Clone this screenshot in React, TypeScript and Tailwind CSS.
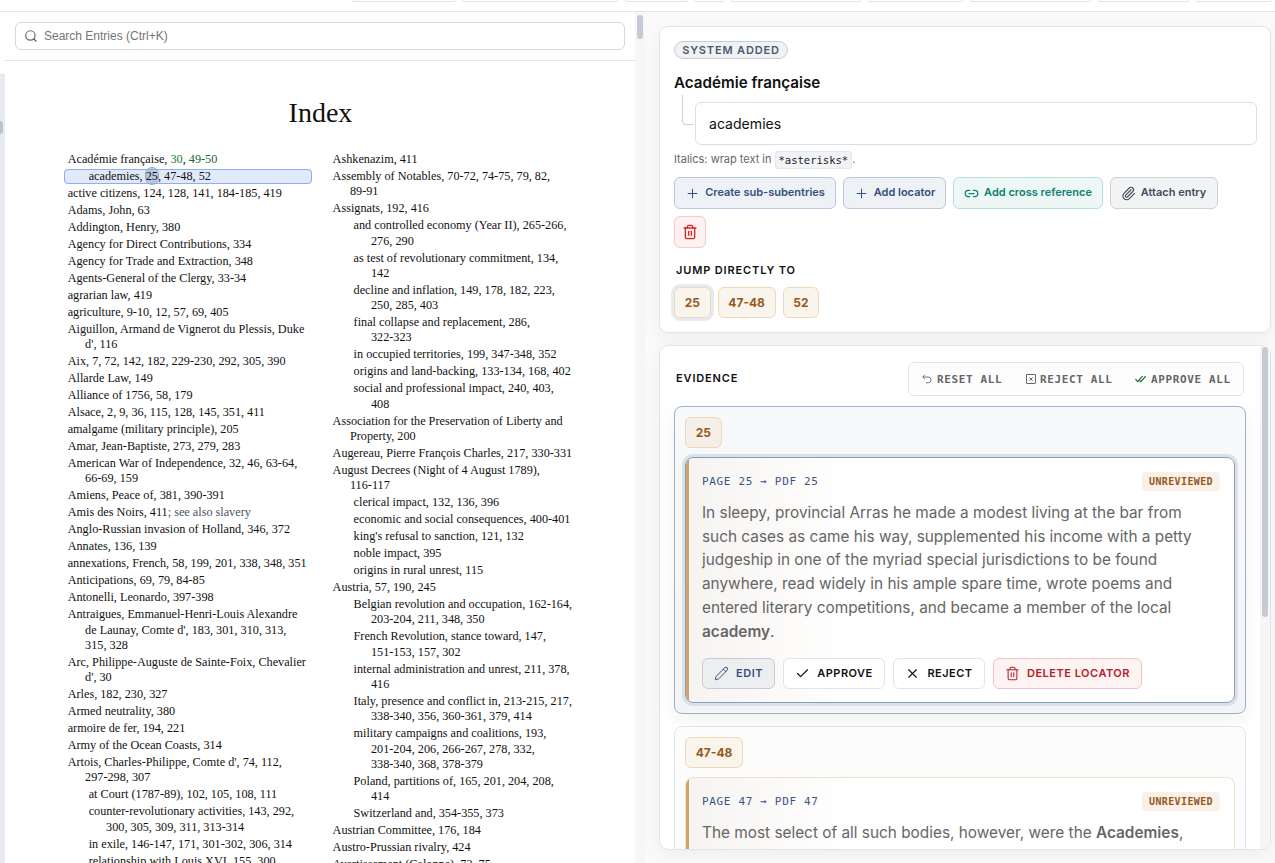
import React from 'react';
import { Check, Link2, Paperclip, Pencil, Plus, Search, Trash2, X } from 'lucide-react';

interface IndexEntry {
  head: string;
  green?: string;
  see?: string;
  rest?: string[];
  sub?: boolean;
}

const leftColumn: IndexEntry[] = [
  { head: 'active citizens, 124, 128, 141, 184-185, 419' },
  { head: 'Adams, John, 63' },
  { head: 'Addington, Henry, 380' },
  { head: 'Agency for Direct Contributions, 334' },
  { head: 'Agency for Trade and Extraction, 348' },
  { head: 'Agents-General of the Clergy, 33-34' },
  { head: 'agrarian law, 419' },
  { head: 'agriculture, 9-10, 12, 57, 69, 405' },
  { head: 'Aiguillon, Armand de Vignerot du Plessis, Duke', rest: ["d', 116"] },
  { head: 'Aix, 7, 72, 142, 182, 229-230, 292, 305, 390' },
  { head: 'Allarde Law, 149' },
  { head: 'Alliance of 1756, 58, 179' },
  { head: 'Alsace, 2, 9, 36, 115, 128, 145, 351, 411' },
  { head: 'amalgame (military principle), 205' },
  { head: 'Amar, Jean-Baptiste, 273, 279, 283' },
  { head: 'American War of Independence, 32, 46, 63-64,', rest: ['66-69, 159'] },
  { head: 'Amiens, Peace of, 381, 390-391' },
  { head: 'Amis des Noirs, 411', see: '; see also slavery' },
  { head: 'Anglo-Russian invasion of Holland, 346, 372' },
  { head: 'Annates, 136, 139' },
  { head: 'annexations, French, 58, 199, 201, 338, 348, 351' },
  { head: 'Anticipations, 69, 79, 84-85' },
  { head: 'Antonelli, Leonardo, 397-398' },
  { head: 'Antraigues, Emmanuel-Henri-Louis Alexandre', rest: ["de Launay, Comte d', 183, 301, 310, 313,", '315, 328'] },
  { head: 'Arc, Philippe-Auguste de Sainte-Foix, Chevalier', rest: ["d', 30"] },
  { head: 'Arles, 182, 230, 327' },
  { head: 'Armed neutrality, 380' },
  { head: 'armoire de fer, 194, 221' },
  { head: 'Army of the Ocean Coasts, 314' },
  { head: "Artois, Charles-Philippe, Comte d', 74, 112,", rest: ['297-298, 307'] },
  { head: 'at Court (1787-89), 102, 105, 108, 111', sub: true },
  { head: 'counter-revolutionary activities, 143, 292,', rest: ['300, 305, 309, 311, 313-314'], sub: true },
  { head: 'in exile, 146-147, 171, 301-302, 306, 314', sub: true },
  { head: 'relationship with Louis XVI, 155, 300', sub: true },
];

const rightColumn: IndexEntry[] = [
  { head: 'Ashkenazim, 411' },
  { head: 'Assembly of Notables, 70-72, 74-75, 79, 82,', rest: ['89-91'] },
  { head: 'Assignats, 192, 416' },
  { head: 'and controlled economy (Year II), 265-266,', rest: ['276, 290'], sub: true },
  { head: 'as test of revolutionary commitment, 134,', rest: ['142'], sub: true },
  { head: 'decline and inflation, 149, 178, 182, 223,', rest: ['250, 285, 403'], sub: true },
  { head: 'final collapse and replacement, 286,', rest: ['322-323'], sub: true },
  { head: 'in occupied territories, 199, 347-348, 352', sub: true },
  { head: 'origins and land-backing, 133-134, 168, 402', sub: true },
  { head: 'social and professional impact, 240, 403,', rest: ['408'], sub: true },
  { head: 'Association for the Preservation of Liberty and', rest: ['Property, 200'] },
  { head: 'Augereau, Pierre François Charles, 217, 330-331' },
  { head: 'August Decrees (Night of 4 August 1789),', rest: ['116-117'] },
  { head: 'clerical impact, 132, 136, 396', sub: true },
  { head: 'economic and social consequences, 400-401', sub: true },
  { head: "king's refusal to sanction, 121, 132", sub: true },
  { head: 'noble impact, 395', sub: true },
  { head: 'origins in rural unrest, 115', sub: true },
  { head: 'Austria, 57, 190, 245' },
  { head: 'Belgian revolution and occupation, 162-164,', rest: ['203-204, 211, 348, 350'], sub: true },
  { head: 'French Revolution, stance toward, 147,', rest: ['151-153, 157, 302'], sub: true },
  { head: 'internal administration and unrest, 211, 378,', rest: ['416'], sub: true },
  { head: 'Italy, presence and conflict in, 213-215, 217,', rest: ['338-340, 356, 360-361, 379, 414'], sub: true },
  { head: 'military campaigns and coalitions, 193,', rest: ['201-204, 206, 266-267, 278, 332,', '338-340, 368, 378-379'], sub: true },
  { head: 'Poland, partitions of, 165, 201, 204, 208,', rest: ['414'], sub: true },
  { head: 'Switzerland and, 354-355, 373', sub: true },
  { head: 'Austrian Committee, 176, 184' },
  { head: 'Austro-Prussian rivalry, 424' },
  { head: 'Avertissement (Calonne), 73, 75' },
];

function Entry({ entry }: { entry: IndexEntry }) {
  return (
    <div className={`mb-[1.7px] ${entry.sub ? 'pl-[21px]' : ''}`}>
      <div>
        {entry.head}
        {entry.green && (
          <>
            <span className="text-[#15803d]">{entry.green.split(', ')[0]}</span>,{' '}
            <span className="text-[#166534]">{entry.green.split(', ')[1]}</span>
          </>
        )}
        {entry.see && <span className="text-[#475569]">{entry.see}</span>}
      </div>
      {entry.rest?.map((line) => (
        <div key={line} className="pl-[17.4px]">{line}</div>
      ))}
    </div>
  );
}

function Chip({ label, className = '' }: { label: string; className?: string }) {
  return (
    <button className={`h-[31px] px-[9.7px] pt-px rounded-md border border-[#ecd9bd] text-[#96591c] text-[12px] font-bold ${className}`}>
      {label}
    </button>
  );
}

function UndoIcon() {
  return (
    <svg className="w-[10px] h-[10px] -mt-[2px]" viewBox="0 0 10 10" fill="none" stroke="currentColor" strokeWidth="0.9">
      <path d="M3 0.8 0.8 3 3 5.2M0.8 3h5.4a2.9 2.9 0 0 1 0 5.8H4" />
    </svg>
  );
}

function BoxXIcon() {
  return (
    <svg className="w-[10px] h-[10px] -mt-[2px]" viewBox="0 0 10 10" fill="none" stroke="currentColor">
      <rect x="0.5" y="0.5" width="9" height="9" rx="0.5" />
      <path d="m3.3 3.3 3.4 3.4m0-3.4L3.3 6.7" />
    </svg>
  );
}

function DoubleCheckIcon() {
  return (
    <svg className="w-[11px] h-[8px] -mt-[2px] text-[#166534]" viewBox="0 0 11 8" fill="none" stroke="currentColor" strokeWidth="1.1">
      <path d="M0.4 4.2 2.8 6.6 7.4 1.2M4.6 5.6l1.2 1.1L10.7 1.2" />
    </svg>
  );
}

interface EvidenceProps {
  page: string;
  active?: boolean;
  children: React.ReactNode;
}

function EvidenceCard({ page, active, children }: EvidenceProps) {
  return (
    <div
      className={`mt-[9px] h-[246px] rounded-lg border overflow-hidden flex bg-linear-to-r from-[#f6f4f1] to-white to-30% ${
        active ? 'border-[#8b9dbb] shadow-[0_0_0_3px_#dbe1e9]' : 'border-[#f0e0c8]'
      }`}
    >
      <div className="w-[3px] shrink-0 bg-[#d3a467]" />
      <div className="flex-1 pl-[13px] pr-[14px] pt-[14px]">
        <div className="flex justify-between items-center h-[19px]">
          <span className="pt-px font-['DejaVu_Sans_Mono','Liberation_Mono',monospace] text-[11px] tracking-[0.66px] text-[#3b5685]">
            PAGE {page} → PDF {page}
          </span>
          <span className="h-[19px] px-[7px] rounded bg-[#faf0e8] text-[#96591c] font-['DejaVu_Sans_Mono','Liberation_Mono',monospace] font-bold text-[10px] leading-[19px] tracking-[0.38px]">
            UNREVIEWED
          </span>
        </div>
        <div className="mt-[9.9px] text-[15.36px] leading-[23.8px] text-[#666] whitespace-nowrap">{children}</div>
        <div className="mt-[14.1px] flex gap-2 text-[11px] font-semibold tracking-[0.5px] text-[#111]">
          <button className="h-[31px] w-[73px] flex items-center justify-center gap-[7px] rounded-md border border-[#c6ccd7] bg-[#edeef0] text-[#34507f]">
            <Pencil size={15} strokeWidth={1.6} />
            EDIT
          </button>
          <button className="h-[31px] w-[102px] flex items-center justify-center gap-[7px] rounded-md border border-[#e2e4ec] bg-white">
            <Check size={15} strokeWidth={1.8} />
            APPROVE
          </button>
          <button className="h-[31px] w-[92px] flex items-center justify-center gap-[7px] rounded-md border border-[#e2e4ec] bg-white">
            <X size={15} strokeWidth={1.8} />
            REJECT
          </button>
          <button className="h-[31px] w-[149px] flex items-center justify-center gap-[7px] rounded-md border border-[#f0c4c4] bg-[#fdf3f3] text-[#b3202a]">
            <Trash2 size={15} strokeWidth={1.7} />
            DELETE LOCATOR
          </button>
        </div>
      </div>
    </div>
  );
}

function TopBar() {
  return (
    <header className="h-3 shrink-0 bg-white border-b border-[#e5e5ea] pl-[352px] flex gap-[7px] overflow-hidden">
      <div className="h-[2px] shrink-0 w-[103px] rounded-b border border-t-0 border-[#e0e2e8]" />
      <div className="h-[2px] shrink-0 w-[156px] rounded-b border border-t-0 border-[#e0e2e8]" />
      <div className="h-[2px] shrink-0 w-[63px] rounded-b border border-t-0 border-[#e0e2e8]" />
      <div className="h-[2px] shrink-0 w-[29px] rounded-b border border-t-0 border-[#e0e2e8]" />
      <div className="h-[2px] shrink-0 w-[130px] rounded-b border border-t-0 border-[#e0e2e8]" />
      <div className="h-[2px] shrink-0 w-[95px] rounded-b border border-t-0 border-[#e0e2e8]" />
      <div className="h-[2px] shrink-0 w-[121px] rounded-b border border-t-0 border-[#e0e2e8]" />
      <div className="h-[2px] shrink-0 w-[91px] rounded-b border border-t-0 border-[#e0e2e8]" />
      <div className="h-[2px] shrink-0 w-[75px] rounded-b border border-t-0 border-[#e0e2e8]" />
    </header>
  );
}

function IndexPanel() {
  return (
    <section className="w-[630px] shrink-0 bg-white overflow-hidden flex flex-col">
      <div className="h-[49px] shrink-0 px-[10px] pt-[10px] border-b border-[#e4e6ec]">
        <div className="h-[28px] rounded-md border border-[#d3dae5] flex items-center gap-[6px] px-[8px] text-[#757575]">
          <Search size={14} strokeWidth={2} className="text-[#666]" />
          <span className="font-['Liberation_Sans',sans-serif] text-[12px]">Search Entries (Ctrl+K)</span>
        </div>
      </div>
      <div className="font-['Liberation_Serif',serif] text-[#111]">
        <h1 className="pt-[33px] pl-px text-center text-[28px] leading-[38px]">Index</h1>
        <div className="mt-[20px] flex pl-[62.7px] text-[12.22px] leading-[15.3px] whitespace-nowrap">
          <div className="w-[264.9px] shrink-0">
            <Entry entry={{ head: 'Académie française, ', green: '30, 49-50' }} />
            {/* Selected subentry */}
            <div className="mb-[1.7px] -ml-[3.4px] mr-[21px] pl-[24.4px] rounded-[4px] bg-[#e1eafb] outline outline-[#8eaef0] -outline-offset-1">
              academies,{' '}
              <span className="py-px rounded-full bg-[#b9c6df] outline outline-[#94a5c6]">25</span>, 47-48, 52
            </div>
            {leftColumn.map((entry) => (
              <Entry key={entry.head} entry={entry} />
            ))}
          </div>
          <div>
            {rightColumn.map((entry) => (
              <Entry key={entry.head} entry={entry} />
            ))}
          </div>
        </div>
      </div>
    </section>
  );
}

function EntryEditor() {
  return (
    <section className="h-[307px] shrink-0 rounded-[9px] border border-[#e0e4ee] bg-white px-[14px] pt-[14px] shadow-[0_6px_20px_rgba(0,0,0,0.05)]">
      <div className="w-[114px] h-[18px] rounded-full border border-[#c5ccd8] bg-[#f0f2f4] flex items-center justify-center text-[11px] font-semibold tracking-[0.85px] text-[#4b5a6e]">
        SYSTEM ADDED
      </div>
      <h2 className="mt-[13px] h-[22px] leading-[22px] text-[15.2px] font-semibold text-[#111]">Académie française</h2>
      <div className="mt-[1px] flex">
        <div className="ml-2 w-[11px] h-[30px] shrink-0 rounded-bl border-l border-b border-[#c8cfdb]" />
        <div className="ml-[2px] mt-[7px] w-[562px] shrink-0 h-[43px] rounded-md border border-[#d9dee8] px-[13px] flex items-center text-[14.08px] text-[#111]">
          academies
        </div>
      </div>
      <p className="mt-[5px] h-[19px] flex items-center text-[11px] text-[#666]">
        Italics: wrap text in
        <code className="ml-[3px] h-[18px] leading-[16px] px-[3px] rounded-[3px] border border-[#e3e6ea] bg-[#f1f3f6] text-[#222] font-['DejaVu_Sans_Mono','Liberation_Mono',monospace] text-[10.6px] tracking-[-0.05px]">
          *asterisks*
        </code>
        .
      </p>
      <div className="mt-2 flex flex-wrap gap-[7px] text-[11px] font-semibold">
        <button className="h-8 w-[162px] pb-[2px] rounded-md border border-[#bcc9da] bg-[#eef1f5] text-[#34507f] flex items-center justify-center gap-[5px]">
          <Plus size={15} strokeWidth={1.6} className="mt-[2px]" />
          Create sub-subentries
        </button>
        <button className="h-8 w-[103px] pb-[2px] rounded-md border border-[#bcc9da] bg-[#eef1f5] text-[#34507f] flex items-center justify-center gap-[5px]">
          <Plus size={15} strokeWidth={1.6} className="mt-[2px]" />
          Add locator
        </button>
        <button className="h-8 w-[150px] pb-[2px] rounded-md border border-[#b5e0d8] bg-[#edf7f5] text-[#0f8074] flex items-center justify-center gap-[5px]">
          <Link2 size={15} strokeWidth={2} className="mt-[2px]" />
          Add cross reference
        </button>
        <button className="h-8 w-[108px] pb-[2px] rounded-md border border-[#cdd1d8] bg-[#f2f3f5] text-[#414c5e] flex items-center justify-center gap-[5px]">
          <Paperclip size={15} strokeWidth={1.8} className="mt-[2px] -ml-px" />
          Attach entry
        </button>
        <button className="w-8 h-8 rounded-md border border-[#f9c6c6] bg-[#fef1f1] text-[#dc2626] flex items-center justify-center">
          <Trash2 size={16} strokeWidth={2} />
        </button>
      </div>
      <h3 className="mt-[14px] ml-[2px] h-4 leading-4 text-[11px] font-semibold tracking-[0.86px] text-[#111]">JUMP DIRECTLY TO</h3>
      <div className="mt-[9px] flex gap-[7px]">
        <Chip label="25" className="bg-[#faf5ec] shadow-[0_0_0_3px_#e7ebf0]" />
        <Chip label="47-48" className="bg-[#faf5ec]" />
        <Chip label="52" className="bg-[#faf5ec]" />
      </div>
    </section>
  );
}

function EvidencePanel() {
  return (
    <section className="mt-3 h-[505px] shrink-0 flex rounded-[9px] border border-[#e0e4ee] bg-white overflow-hidden shadow-[0_6px_20px_rgba(0,0,0,0.05)]">
      <div className="w-[600px] shrink-0 pl-[14px] pr-[14px] pt-4">
        <div className="flex justify-between items-center pl-[2px] pr-[2px]">
          <h3 className="text-[11px] font-semibold tracking-[0.86px] text-[#111] -mt-[2px]">EVIDENCE</h3>
          <div className="h-[34px] w-[336px] pt-[2px] rounded-md border border-[#e2e4ec] bg-[#fdfdfd] flex items-center pl-[13px] font-['DejaVu_Sans_Mono','Liberation_Mono',monospace] font-bold text-[11px] tracking-[0.62px] text-[#666]">
            <button className="w-[104px] flex items-center gap-[5px]"><UndoIcon />RESET ALL</button>
            <button className="w-[109px] flex items-center gap-1"><BoxXIcon />REJECT ALL</button>
            <button className="flex items-center gap-[5px]"><DoubleCheckIcon />APPROVE ALL</button>
          </div>
        </div>
        <div className="mt-[10px] h-[308px] rounded-lg border border-[#9fb0c9] bg-linear-to-b from-[#f8f9fb] to-[#f2f4f7] px-[10px] pt-[10px] shadow-[0_6px_18px_rgba(0,0,0,0.06)]">
          <Chip label="25" className="block bg-[#f5efe8]" />
          <EvidenceCard page="25" active>
            In sleepy, provincial Arras he made a modest living at the bar from<br />
            such cases as came his way, supplemented his income with a petty<br />
            judgeship in one of the myriad special jurisdictions to be found<br />
            anywhere, read widely in his ample spare time, wrote poems and<br />
            entered literary competitions, and became a member of the local<br />
            <strong className="font-semibold">academy</strong>.
          </EvidenceCard>
        </div>
        <div className="mt-3 h-[308px] rounded-lg border border-[#e2e4ec] bg-[#fcfcfc] px-[10px] pt-[10px]">
          <Chip label="47-48" className="block bg-[#f9f4ec]" />
          <EvidenceCard page="47">
            The most select of all such bodies, however, were the <strong className="font-semibold">Academies</strong>,
          </EvidenceCard>
        </div>
      </div>
      {/* Scrollbar */}
      <div className="w-[10px] bg-[#f5f5f6] px-[2px] pt-[1px]">
        <div className="h-[270px] rounded-full bg-[#c4cbd7]" />
      </div>
    </section>
  );
}

export default function App() {
  return (
    <div className="w-[1275px] h-[863px] overflow-hidden flex flex-col bg-[#fafafa] font-[Inter,sans-serif]">
      <TopBar />
      <main className="flex-1 min-h-0 flex">
        <div className="w-[5px] shrink-0 bg-white pt-[62px]">
          <div className="h-full bg-[#e7eaef] border-t border-[#dde1e8] pt-[46px]">
            <div className="w-[3px] h-[13px] rounded-r bg-[#b8c3d4]" />
          </div>
        </div>
        <IndexPanel />
        <div className="w-[10px] shrink-0 bg-[#f6f6f7] px-[2px] pt-[3px]">
          <div className="h-[24px] rounded-full bg-[#c4cbd7]" />
        </div>
        <div className="w-[626px] pl-[14px] pt-[14px] flex flex-col">
          <EntryEditor />
          <EvidencePanel />
        </div>
      </main>
    </div>
  );
}
